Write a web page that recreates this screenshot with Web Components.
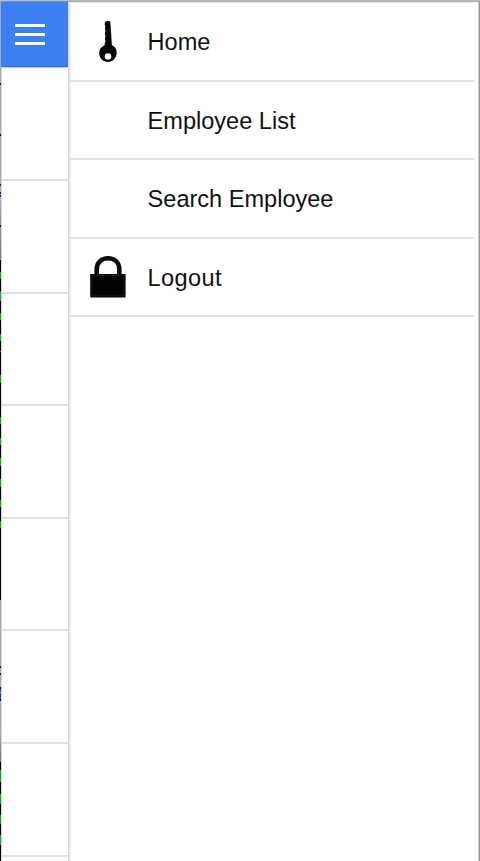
<!DOCTYPE html>
<html lang="en">
<head>
<meta charset="utf-8">
<title>Employee Directory</title>
<style>
html,body{margin:0;height:100%;background:#fff;overflow:hidden}
body{font-family:"Liberation Sans",Arial,sans-serif;color:#111}
</style>
</head>
<body>
<app-shell>
  <page-peek slot="page"></page-peek>
  <side-menu slot="menu">
    <menu-item><key-icon slot="icon"></key-icon>Home</menu-item>
    <menu-item>Employee List</menu-item>
    <menu-item>Search Employee</menu-item>
    <menu-item style="letter-spacing:.4px"><lock-icon slot="icon"></lock-icon>Logout</menu-item>
  </side-menu>
</app-shell>
<script>
const define = (name, html) => customElements.define(name, class extends HTMLElement {
  constructor() { super(); this.attachShadow({mode: 'open'}).innerHTML = html; }
});

define('edge-strip', `<style>
:host{display:block;width:1px;height:861px}svg{display:block}
</style><svg width="1" height="861" shape-rendering="crispEdges">
<defs><linearGradient id="g" x1="0" y1="0" x2="0" y2="1"><stop offset="0" stop-color="#aaa"/><stop offset="1" stop-color="#777"/></linearGradient></defs>
<rect width="1" height="861" fill="#a9a9a9"/><rect y="200" width="1" height="59" fill="url(#g)"/>
<path stroke="#111" stroke-width="1" d="M.5 83v2M.5 134v2M.5 225v2"/>
<path stroke="#1616b0" stroke-width="1" d="M.5 184v2M.5 192v2M.5 195v2"/>
<rect y="260" width="1" height="340"/>
<path stroke="#00b400" d="M.5 272v7M.5 291v10M.5 313v7M.5 334v7M.5 351v1M.5 375v8M.5 417v7M.5 438v7M.5 458v8M.5 479v8M.5 500v7M.5 521v7"/>
<path stroke="#112" d="M.5 666v2M.5 673v2M.5 687v2M.5 699v2"/><path stroke="#244b8a" d="M.5 689v3M.5 693v6"/>
<rect y="732" width="1" height="30" fill="url(#g)"/><rect y="762" width="1" height="99"/>
<path stroke="#00b400" d="M.5 770v12M.5 794v10M.5 815v9M.5 835v10"/></svg>`);

define('menu-button', `<style>
:host{display:flex;flex-direction:column;gap:6px}i{width:30px;height:3px;background:#fff;box-shadow:0 0 1px #146cf0}
</style><i></i><i></i><i></i>`);

define('page-peek', `<style>
:host{display:grid;grid-template-columns:1px 1px 1fr;width:68px;height:861px}
.rail{background:#d8d8d8}
header{box-sizing:border-box;height:66px;padding:23px 0 0 12.6px;background:#3c80f3;border-bottom:1px solid #2470ea;box-shadow:-1px 0 #3c80f3,0 1px 1px #c4c8e0}
.row{box-sizing:border-box;height:112.6px;border-bottom:2px solid #e1e1e1}
.row:first-of-type{height:114px}
main{padding-top:1px}
</style><edge-strip></edge-strip><div class="rail"></div><main><header><menu-button></menu-button></header>
${'<div class="row"></div>'.repeat(7)}</main>`);

define('key-icon', `<style>:host,svg{display:block}</style>
<svg width="22" height="44" viewBox="0 0 22 44"><path fill="#080808" fill-rule="evenodd" d="M8.4 1.6Q11 .4 13.3 1.6Q14.2 14 14.9 25.3C18.2 26.7 19.8 29.6 19.7 33C19.4 38.2 15.6 41.9 11 41.9C6 41.9 2.3 38.4 2.2 33.2C2.1 29.7 3.9 26.8 7.6 25.2L7.9 22.8L8.5 21.6L8 19.8V17.7L8.5 16.6L8 14.8V12.5L8.5 11.3L8 9.8V7.5L8.4 6.6L7.8 5.1V2.7ZM11 33.2A3.3 3.3 0 1 0 11 39.8A3.3 3.3 0 1 0 11 33.2Z"/></svg>`);

define('lock-icon', `<style>:host,svg{display:block}</style>
<svg width="38" height="44" viewBox="0 0 38 44"><path fill="none" stroke="#0c0c0c" stroke-width="4.6" d="M7.7 20V14.5C7.7 7.6 12.3 3.3 19 3.3S30.3 7.6 30.3 14.5V20"/><rect x="1.2" y="19" width="35.4" height="23.5" rx=".7" fill="#020202"/><rect x="2.8" y="20.6" width="32.2" height="20.3" fill="none" stroke="#222" stroke-width=".7"/></svg>`);

define('menu-item', `<style>
:host{display:grid;grid-template-columns:40px 1fr;column-gap:20px;align-items:center;box-sizing:border-box;height:78.5px;padding:0 0 0 19.6px;border-bottom:2px solid #e1e1e1;font-size:23.55px;line-height:28px;white-space:nowrap}
.icon{display:grid;place-items:center;padding-top:1px}
.label{padding-top:2.4px}
</style><span class="icon"><slot name="icon"></slot></span><span class="label"><slot></slot></span>`);

define('side-menu', `<style>
:host{display:block;box-sizing:border-box;height:861px;padding-top:3px;padding-right:4px;background:linear-gradient(90deg,#d0d0d0,#e8e8e8 1.5px,#fff 4px)}
</style><slot></slot>`);

define('app-shell', `<style>
:host{display:grid;grid-template-columns:68px 410px 2px;height:861px;overflow:hidden;position:relative;background:#fff}
.end{background:linear-gradient(90deg,#c9c9c9 1px,#979797 1px);position:relative}
.top{position:absolute;inset:0 0 auto;height:2px;background:linear-gradient(#bcbcbc 1px,#aaa 1px)}
.top::after{content:"";position:absolute;top:1px;left:2px;width:66px;height:1px;background:#6e94cf}
.top::before{content:"";position:absolute;top:2px;left:68px;width:406px;height:1px;background:#e8e8e8}
</style><slot name="page"></slot><slot name="menu"></slot><div class="end"></div><div class="top"></div>`);
</script>
</body>
</html>
